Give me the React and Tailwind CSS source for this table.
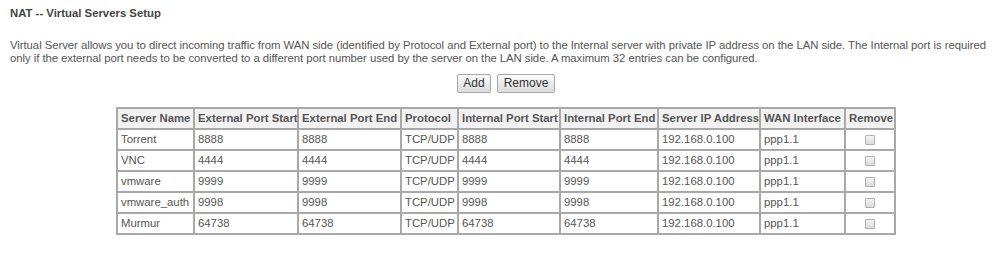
export default function App() {
  const rows = [
    ["Torrent", "8888", "8888", "TCP/UDP", "8888", "8888", "192.168.0.100", "ppp1.1"],
    ["VNC", "4444", "4444", "TCP/UDP", "4444", "4444", "192.168.0.100", "ppp1.1"],
    ["vmware", "9999", "9999", "TCP/UDP", "9999", "9999", "192.168.0.100", "ppp1.1"],
    ["vmware_auth", "9998", "9998", "TCP/UDP", "9998", "9998", "192.168.0.100", "ppp1.1"],
    ["Murmur", "64738", "64738", "TCP/UDP", "64738", "64738", "192.168.0.100", "ppp1.1"],
  ];
  const heads = [
    ["Server Name", "w-[77px]"],
    ["External Port Start", "w-[104px]"],
    ["External Port End", "w-[103px]"],
    ["Protocol", "w-[57px]"],
    ["Internal Port Start", "w-[102px]"],
    ["Internal Port End", "w-[98px]"],
    ["Server IP Address", "w-[102px]"],
    ["WAN Interface", "w-[85px]"],
    ["Remove", "w-[50px]"],
  ];
  return (
    <div
      className="w-[1000px] h-[265px] bg-white text-[11.35px] text-[#555] leading-[13px]"
      style={{ fontFamily: '"Liberation Sans", Arial, sans-serif' }}
    >
      <div className="pl-[10px] pt-[7px]">
        <div className="font-bold text-[#444] h-[13px]">NAT -- Virtual Servers Setup</div>
        <div className="mt-[19px] pr-[4px] tracking-[-0.05px]">
          Virtual Server allows you to direct incoming traffic from WAN side (identified by Protocol and External port) to the Internal server with private IP address on the LAN side. The Internal port is required only if the external port needs to be converted to a different port number used by the server on the LAN side. A maximum 32 entries can be configured.
        </div>
      </div>
      <div className="pl-[12px]">
        <div className="flex justify-center gap-[6px] mt-[9px]">
          <button className="h-[19px] w-[34px] border border-[#a9a9a9] rounded-[2px] bg-gradient-to-b from-[#fbfbfb] to-[#dcdcdc] text-[#333] text-[12px] leading-[17px]">
            Add
          </button>
          <button className="h-[19px] w-[58px] border border-[#a9a9a9] rounded-[2px] bg-gradient-to-b from-[#fbfbfb] to-[#dcdcdc] text-[#333] text-[12px] leading-[17px]">
            Remove
          </button>
        </div>
        <div className="flex justify-center mt-[14px]">
          <table className="border-separate border-spacing-0 border border-[#a8a8a8] table-fixed w-[778px]">
            <thead>
              <tr>
                {heads.map(([h, w]) => (
                  <th
                    key={h}
                    className={`${w} h-[21px] border border-[#a8a8a8] bg-[#f2f2f2] text-left font-bold pl-[3px] pr-0 py-0 whitespace-nowrap text-[#555]`}
                  >
                    {h}
                  </th>
                ))}
              </tr>
            </thead>
            <tbody>
              {rows.map((r) => (
                <tr key={r[0]}>
                  {r.map((c, i) => (
                    <td
                      key={i}
                      className="h-[21px] border border-[#a8a8a8] px-[3px] py-0 whitespace-nowrap"
                    >
                      {c}
                    </td>
                  ))}
                  <td className="h-[21px] border border-[#a8a8a8] p-0">
                    <div className="flex justify-center items-center">
                      <span className="block w-[10px] h-[10px] border border-[#b0b0b0] rounded-[1px] bg-gradient-to-b from-[#f4f4f4] to-[#dadada]" />
                    </div>
                  </td>
                </tr>
              ))}
            </tbody>
          </table>
        </div>
      </div>
    </div>
  );
}
